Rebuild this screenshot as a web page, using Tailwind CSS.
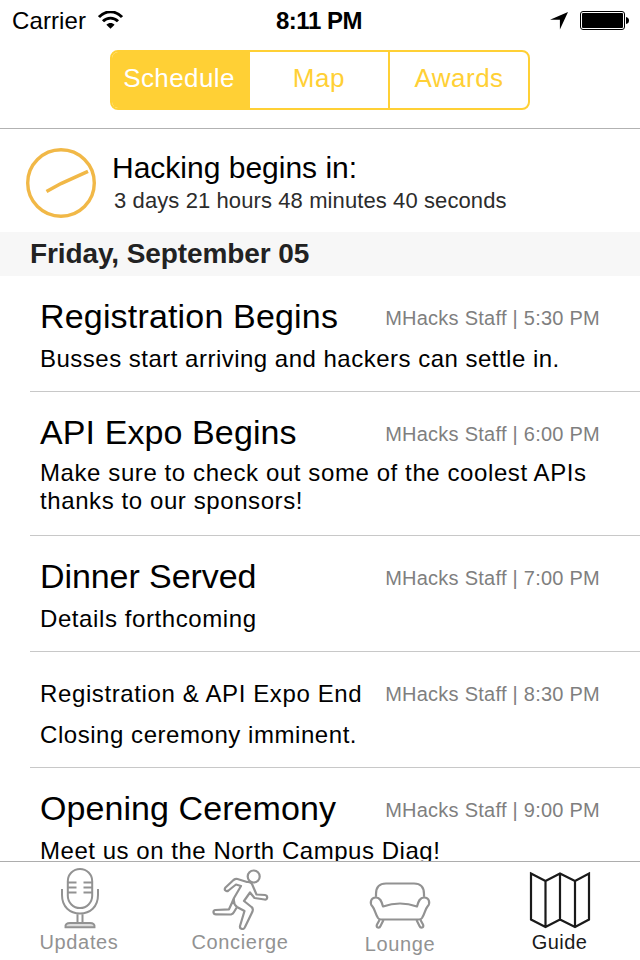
<!DOCTYPE html>
<html lang="en">
<head>
<meta charset="utf-8">
<title>Guide</title>
<script src="https://cdn.jsdelivr.net/npm/@tailwindcss/browser@4"></script>
</head>
<body class="bg-white">
<div class="w-[640px] h-[960px] overflow-hidden flex flex-col bg-white text-black font-['Liberation_Sans',Arial,sans-serif] whitespace-nowrap">
  <header class="h-[129px] shrink-0 border-b border-[#b2b2b2]">
    <div class="h-10 grid grid-cols-3 pl-3 pr-[11px] text-[24px] leading-[42px]">
      <div class="flex tracking-[0.1px]">Carrier
        <svg class="ml-3 mt-[11px]" width="25" height="18" viewBox="0 0 25 18" fill="none" stroke="#000"><path d="M1 6.1C7.5-.9 17.500-.9 24 6.100" stroke-width="2.900"/><path d="M5 10.300C9.200 6 15.800 6 20 10.300" stroke-width="2.900"/><path d="M8.400 13.800C10.700 11.300 14.300 11.300 16.600 13.800L12.500 17.800Z" fill="#000" stroke="none"/></svg>
      </div>
      <div class="-ml-[3px] text-center font-bold tracking-[-0.45px]">8:11 PM</div>
      <div class="flex justify-end">
        <svg class="mt-[11px] mr-3" width="18" height="19" viewBox="0 0 18 19"><path d="M18 1L0 8.800H9.900V18.500Z"/></svg>
        <svg class="mt-[11px]" width="49" height="19" viewBox="0 0 49 19"><rect x=".5" y=".5" width="44" height="18" rx="2.500" fill="none" stroke="#000"/><rect x="2" y="2" width="41" height="15" rx="1"/><path d="M46 6Q49 6.500 49 9.500T46 13Z"/></svg>
      </div>
    </div>
    <nav class="mt-[10px] mx-auto w-[420px] h-[60px] rounded-[8px] border-2 border-[#ffd035] overflow-hidden flex text-[26px] leading-[53px] text-center text-[#ffd035]">
      <div class="w-[138px] pr-[4px] bg-[#ffd035] text-white tracking-[0.4px]">Schedule</div>
      <div class="w-[140px] border-r-2 border-[#ffd035] tracking-[0.6px]">Map</div>
      <div class="flex-1 tracking-[0.5px]">Awards</div>
    </nav>
  </header>
  <main class="flex-1 min-h-0 overflow-hidden">
    <section class="h-[103px] flex pl-[26px] pt-[19px]">
      <svg width="70" height="70" viewBox="0 0 70 70" fill="none" stroke="#f1b847"><circle cx="35" cy="35" r="33.300" stroke-width="3.400"/><path d="M20.500 43.500L35 35.500L62 23.300" stroke-width="3.600"/></svg>
      <div class="ml-4 pt-[1px]">
        <h1 class="text-[30px] leading-[38px]">Hacking begins in:</h1>
        <p class="ml-[2px] text-[22px] leading-[28px] tracking-[0.1px] text-[#2c2c2c]">3 days 21 hours 48 minutes 40 seconds</p>
      </div>
    </section>
    <h2 class="h-11 pl-[30px] bg-[#f7f7f7] text-[#222] text-[28px] leading-[43px] font-bold tracking-[-0.1px]">Friday, September 05</h2>
    <article class="ml-[30px] h-[116px] pl-[10px] pr-10 pt-5 border-b border-[#c8c8c8]">
      <div class="flex justify-between"><h3 class="text-[34px] leading-10 tracking-[0.17px]">Registration Begins</h3><span class="pt-[2px] text-[20px] leading-10 tracking-[0.25px] text-[#7f7f7f]">MHacks Staff | 5:30 PM</span></div>
      <p class="mt-[7px] text-[24px] leading-7 tracking-[0.49px]">Busses start arriving and hackers can settle in.</p>
    </article>
    <article class="ml-[30px] h-[144px] pl-[10px] pr-10 pt-5 border-b border-[#c8c8c8]">
      <div class="flex justify-between"><h3 class="text-[34px] leading-10 tracking-[0.1px]">API Expo Begins</h3><span class="pt-[2px] text-[20px] leading-10 tracking-[0.25px] text-[#7f7f7f]">MHacks Staff | 6:00 PM</span></div>
      <p class="mt-[5px] text-[24px] leading-7 tracking-[0.59px]">Make sure to check out some of the coolest APIs<br>thanks to our sponsors!</p>
    </article>
    <article class="ml-[30px] h-[116px] pl-[10px] pr-10 pt-5 border-b border-[#c8c8c8]">
      <div class="flex justify-between"><h3 class="text-[34px] leading-10 tracking-[-0.08px]">Dinner Served</h3><span class="pt-[2px] text-[20px] leading-10 tracking-[0.25px] text-[#7f7f7f]">MHacks Staff | 7:00 PM</span></div>
      <p class="mt-[7px] text-[24px] leading-7 tracking-[0.59px]">Details forthcoming</p>
    </article>
    <article class="ml-[30px] h-[116px] pl-[10px] pr-10 pt-5 border-b border-[#c8c8c8]">
      <div class="flex justify-between"><h3 class="pt-[2px] text-[24px] leading-10 tracking-[0.62px]">Registration &amp; API Expo End</h3><span class="pt-[2px] text-[20px] leading-10 tracking-[0.25px] text-[#7f7f7f]">MHacks Staff | 8:30 PM</span></div>
      <p class="mt-[7px] h-7 text-[24px] leading-7 tracking-[0.55px]">Closing ceremony imminent.</p>
    </article>
    <article class="ml-[30px] h-[116px] pl-[10px] pr-10 pt-5">
      <div class="flex justify-between"><h3 class="text-[34px] leading-10 tracking-[0.07px]">Opening Ceremony</h3><span class="pt-[2px] text-[20px] leading-10 tracking-[0.25px] text-[#7f7f7f]">MHacks Staff | 9:00 PM</span></div>
      <p class="mt-[7px] text-[24px] leading-7 tracking-[0.53px]">Meet us on the North Campus Diag!</p>
    </article>
  </main>
  <footer class="h-[99px] shrink-0 border-t border-[#adadad] bg-white grid grid-cols-4 text-center text-[20px] leading-6 tracking-[0.65px] text-[#929292]">
    <div class="flex flex-col items-center">
      <svg class="shrink-0" width="100" height="68" viewBox="0 2 100 68" fill="none" stroke="#929292" stroke-width="2"><rect x="37.800" y="9" width="24.400" height="39" rx="12.200"/><path d="M38 22.500h8.500M38 27.500h8.500M38 32.500h8.500M53.500 22.500H62M53.500 27.500H62M53.500 32.500H62M32 29V35C32 47 40 53.500 50 53.500S68 47 68 35V29M47.500 54V63M52.500 54V63"/><path d="M35.500 67.300C35 64 37 63 40 63H60C63 63 65 64 64.500 67.300Z" fill="#ddd"/></svg>
      <div class="-ml-[2px]">Updates</div>
    </div>
    <div class="flex flex-col items-center">
      <svg class="shrink-0" width="100" height="68" viewBox="0 2 100 68" fill="none" stroke="#929292" stroke-width="2.200" stroke-linejoin="round"><circle cx="63.700" cy="16.500" r="6"/><path d="M57 22L47.500 19Q45.500 18.500 43.500 20L35.500 27.500C33.500 30 36.500 32 38.500 30.500L46 24.500L51 26L44 38Q42 43 39 49.300L25.500 50C22.500 50.500 23 54.300 26 54.300L41 54.500Q43 54 44 52L47 47L54.500 51L50 66C49.500 69.500 54 70 55 67L62.500 51.500Q63.500 48.500 61.500 47L54 41L60 32.500L64.500 38L74.500 39.500C78 40 78 35.500 75 35L66.500 34.500L62 24Q60.500 21.500 57 22M44 38Q43 44 47 47"/></svg>
      <div>Concierge</div>
    </div>
    <div class="flex flex-col items-center">
      <svg class="shrink-0" width="100" height="68" viewBox="0 2 100 68" fill="none" stroke="#929292" stroke-width="2.200" stroke-linejoin="round"><path d="M26 36.500V34Q26 23.500 36 23.500H64Q74 23.500 74 34V36.500M33 46.500Q50 40.500 67 46.500C68.500 41 70 37.500 74 37.500C79.500 37.500 80.500 43.500 77.500 46.500C75 49.500 75 53 72 58Q71 59.500 69 59.500H31Q29 59.500 28 58C25 53 25 49.500 22.500 46.500C19.500 43.500 20.500 37.500 26 37.500C30 37.500 31.500 41 33 46.500Z"/><path d="M29.500 60L27 64.500C25.500 68 29.500 68.500 30.500 66L33.500 60M70.500 60L73 64.500C74.500 68 70.500 68.500 69.500 66L66.500 60"/></svg>
      <div class="mt-[2px]">Lounge</div>
    </div>
    <div class="flex flex-col items-center text-[#1a1a1a]">
      <svg class="shrink-0" width="100" height="68" viewBox="0 2 100 68" fill="none" stroke="#1a1a1a" stroke-width="2.200"><path d="M21 13.500L35.500 21L50 13.500L65 21L79 13.500V59.500L65 67L50 59.500L35.500 67L21 59.500ZM35.500 21V67M50 13.500V59.500M65 21V67"/></svg>
      <div class="-ml-[1px] tracking-[0.4px]">Guide</div>
    </div>
  </footer>
</div>
</body>
</html>
